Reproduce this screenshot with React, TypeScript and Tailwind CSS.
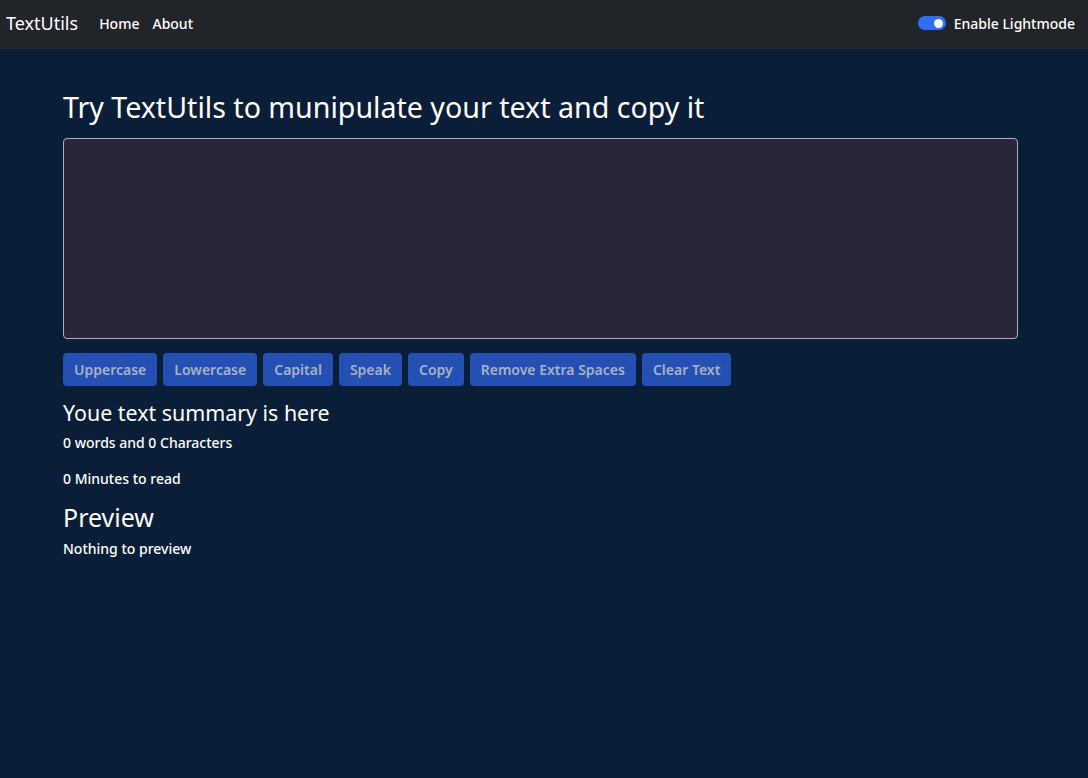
export default function App() {
  const buttons = ['Uppercase', 'Lowercase', 'Capital', 'Speak', 'Copy', 'Remove Extra Spaces', 'Clear Text']

  return (
    <div className="min-h-[778px] bg-[#0b1e38] text-white" style={{ fontFamily: '"Noto Sans", "Open Sans", sans-serif' }}>
      <nav className="flex h-[49px] items-center justify-between bg-[#212529] pb-[3px] pl-[6px] pr-[13px]">
        <div className="flex items-center">
          <span className="text-[18px] leading-none">TextUtils</span>
          <div className="ml-[21px] flex gap-[13px] text-[14px] font-medium">
            <a>Home</a>
            <a>About</a>
          </div>
        </div>
        <div className="flex items-center gap-[8px] text-[14px] font-medium">
          <div className="flex h-[14px] w-[28px] items-center justify-end rounded-full bg-[#2f6ff5] pr-[3px]">
            <div className="h-[9px] w-[9px] rounded-full bg-white" />
          </div>
          <span>Enable Lightmode</span>
        </div>
      </nav>

      <main className="ml-[63px] w-[955px]">
        <h1 className="mt-[40px] text-[28.6px] leading-[36px]">Try TextUtils to munipulate your text and copy it</h1>
        <textarea className="mt-[13px] block h-[201px] w-full resize-none rounded-[4px] border border-[#aab1bb] bg-[#2a2639] p-2 text-white outline-none" />
        <div className="mt-[14px] flex flex-wrap gap-[6px]">
          {buttons.map((b) => (
            <button
              key={b}
              className="h-[33px] rounded-[4px] bg-[#2450b3] px-[11px] text-[14px] font-semibold text-[#a8b1c1]"
            >
              {b}
            </button>
          ))}
        </div>
        <h2 className="mt-[14px] text-[21.4px] leading-[26px]">Youe text summary is here</h2>
        <p className="mt-[6px] text-[14px] font-medium leading-[21px]">0 words and 0 Characters</p>
        <p className="mt-[15px] text-[14px] font-medium leading-[21px]">0 Minutes to read</p>
        <h2 className="mt-[13px] text-[25px] leading-[30px]">Preview</h2>
        <p className="mt-[6px] text-[14px] font-medium leading-[21px]">Nothing to preview</p>
      </main>
    </div>
  )
}
